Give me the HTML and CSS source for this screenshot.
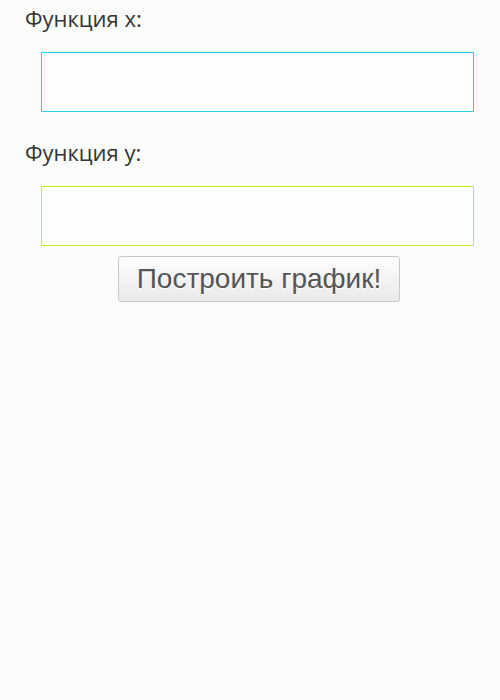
FILE: index.html
```html
<!DOCTYPE html>
<html lang="ru">
<head>
    <meta charset="UTF-8">
    <meta name="viewport" content="width=device-width, initial-scale=1.0">
    <title>График</title>
    <link rel="stylesheet" href="styles.css">
</head>
<body>
    <form class="plot-form">
        <div class="field">
            <label class="field-label" for="fx">Функция x:</label>
            <input class="field-input input-x" id="fx" type="text">
        </div>

        <div class="field">
            <label class="field-label" for="fy">Функция y:</label>
            <input class="field-input input-y" id="fy" type="text">
        </div>

        <div class="actions">
            <button class="plot-button" type="button">Построить график!</button>
        </div>
    </form>
</body>
</html>
```

FILE: styles.css
```css
* {
    margin: 0;
    padding: 0;
    box-sizing: border-box;
}

body {
    background: #fbfdfa;
    font-family: 'Open Sans', sans-serif;
    color: #333;
}

.plot-form {
    width: 500px;
    padding-top: 3px;
}

.field {
    display: flex;
    flex-direction: column;
}

.field + .field {
    margin-top: 25px;
}

.field-label {
    display: block;
    font-size: 22px;
    line-height: 30px;
    padding-left: 25px;
    color: #333;
}

.field-input {
    display: block;
    margin: 19px 0 0 41px;
    width: 433px;
    height: 60px;
    background: #fcfefc;
    border: 1px solid #ccc;
    border-radius: 1px;
    outline: none;
}

.input-x {
    border-color: #14d6f0 #14d6f0 #2ad0ea #14d6f0;
}

.input-y {
    border-color: #c2ee12 #c2ee12 #c8e838 #c2ee12;
}

.actions {
    display: flex;
    justify-content: center;
    padding-left: 18px;
    margin-top: 10px;
}

.plot-button {
    font-family: 'Liberation Sans', Arial, sans-serif;
    font-size: 28px;
    color: #555;
    height: 46px;
    padding: 0 18px;
    background: linear-gradient(#fdfdfd, #e9e9e9);
    border: 1px solid #c8c8c8;
    border-radius: 3px;
    text-shadow: 0 1px 0 #fff;
    cursor: pointer;
}
```
